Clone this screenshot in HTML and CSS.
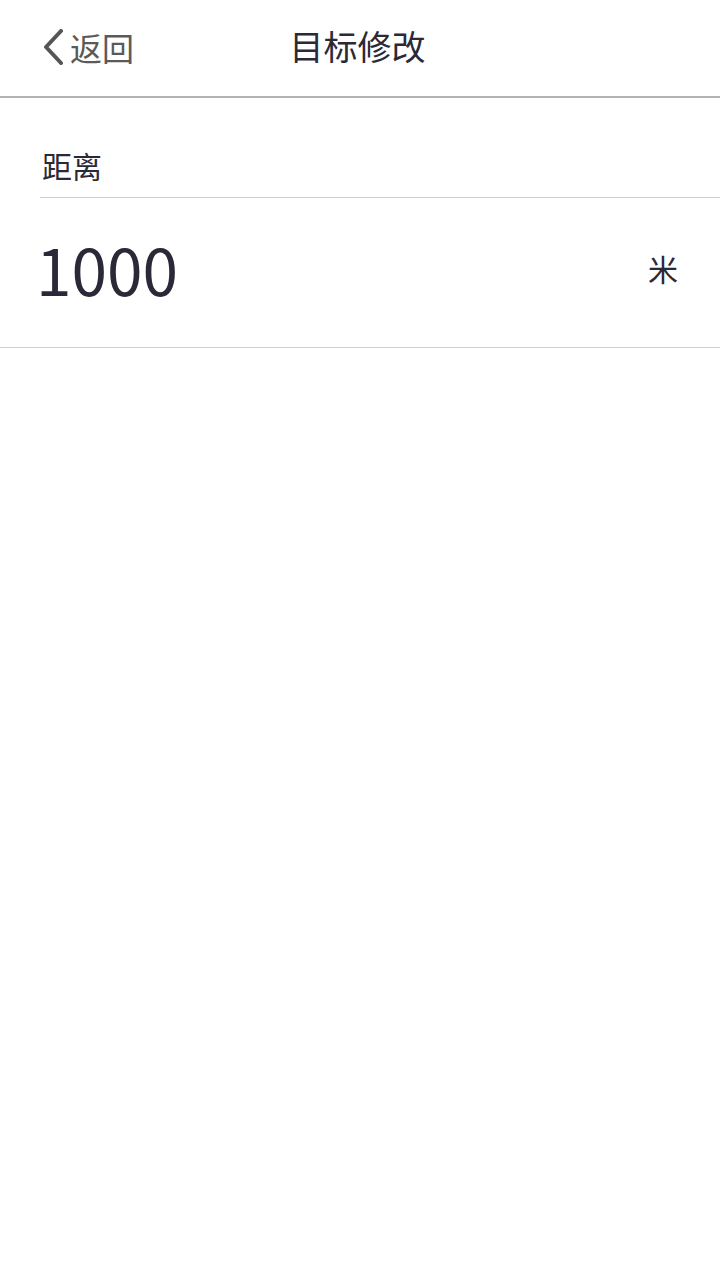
FILE: index.html
```html
<!DOCTYPE html>
<html lang="zh">
<head>
<meta charset="utf-8">
<link rel="stylesheet" href="styles.css">
</head>
<body>
<header class="nav">
  <div class="back">
    <svg class="chev" width="24" height="36" viewBox="0 0 24 36"><path d="M21 2 L6 18 L21 34" fill="none" stroke="#555" stroke-width="4" stroke-linecap="round" stroke-linejoin="round"/></svg>
    <span class="back-text">返回</span>
  </div>
  <h1 class="title">目标修改</h1>
</header>
<section class="form">
  <div class="label">距离</div>
  <div class="row">
    <span class="value">1000</span>
    <span class="unit">米</span>
  </div>
</section>
</body>
</html>
```
FILE: styles.css
```css
html, body { margin: 0; padding: 0; background: #fff; }
body { width: 720px; height: 1280px; font-family: "Noto Sans CJK SC", sans-serif; color: #2a2937; }
.nav { position: relative; height: 96px; border-bottom: 2px solid #b3b3b3; display: flex; align-items: center; justify-content: center; }
.back { position: absolute; left: 40px; top: 27px; display: flex; align-items: center; height: 40px; }
.chev { display: block; margin-right: 6px; }
.back-text { font-size: 32px; color: #5a5a5a; line-height: 40px; }
.title { margin: 0 5px 4px 0; font-size: 34px; font-weight: 400; line-height: 40px; color: #2a2937; }
.form { border-bottom: 1px solid #cfcfcf; }
.label { margin-left: 40px; height: 100px; box-sizing: border-box; padding: 47px 0 0 2px; font-size: 30px; line-height: 40px; border-bottom: 1px solid #cfcfcf; }
.row { height: 149px; box-sizing: border-box; padding: 0 42px 10px 36px; display: flex; align-items: center; justify-content: space-between; }
.value { font-size: 64px; line-height: 70px; color: #2a2937; }
.unit { font-size: 30px; line-height: 40px; }
```
